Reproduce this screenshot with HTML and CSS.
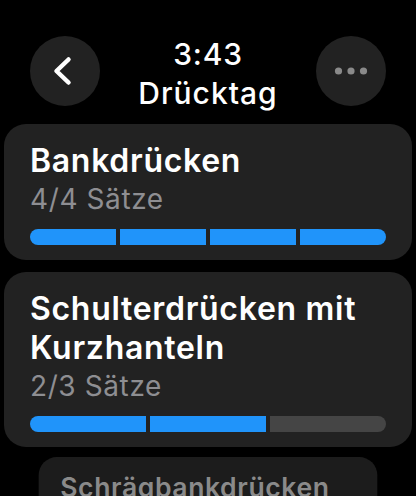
FILE: index.html
```html
<!DOCTYPE html>
<html>
<head>
  <title>Drücktag</title>
  <link rel="stylesheet" href="styles.css">
</head>
<body>

<div class="header">
  <button class="round-btn" aria-label="Zurück">
    <svg width="70" height="70" viewBox="0 0 70 70">
      <path d="M38.5 23.5 L26.5 35 L38.5 46.5" fill="none" stroke="#fff" stroke-width="4.5" stroke-linecap="round" stroke-linejoin="round"/>
    </svg>
  </button>
  <div class="title">
    <div class="time">3:43</div>
    <div class="name">Drücktag</div>
  </div>
  <button class="round-btn" aria-label="Mehr">
    <svg width="70" height="70" viewBox="0 0 70 70">
      <circle cx="22.5" cy="35" r="3.6" fill="#8a8a8a"/>
      <circle cx="35" cy="35" r="3.6" fill="#8a8a8a"/>
      <circle cx="47.5" cy="35" r="3.6" fill="#8a8a8a"/>
    </svg>
  </button>
</div>

<div class="list">
  <div class="card">
    <div class="ex-title">Bankdrücken</div>
    <div class="ex-sets">4/4 Sätze</div>
    <div class="bar">
      <span class="seg done"></span>
      <span class="seg done"></span>
      <span class="seg done"></span>
      <span class="seg done"></span>
    </div>
  </div>

  <div class="card">
    <div class="ex-title">Schulterdrücken mit Kurzhanteln</div>
    <div class="ex-sets">2/3 Sätze</div>
    <div class="bar">
      <span class="seg done"></span>
      <span class="seg done"></span>
      <span class="seg"></span>
    </div>
  </div>

  <div class="card dim">
    <div class="ex-title">Schrägbankdrücken</div>
    <div class="ex-sets">0/3 Sätze</div>
    <div class="bar">
      <span class="seg"></span>
      <span class="seg"></span>
      <span class="seg"></span>
    </div>
  </div>
</div>

</body>
</html>
```

FILE: styles.css
```css
body { margin: 0; background: #000; color: #fff; font-family: Inter, "Noto Sans", sans-serif; overflow: hidden; height: 496px; }

.header { display: flex; align-items: flex-start; justify-content: space-between; padding: 36px 30px 0; height: 88px; }
.round-btn { width: 70px; height: 70px; border: none; border-radius: 50%; background: #222; padding: 0; display: flex; }
.title { text-align: center; font-weight: 500; font-size: 30px; line-height: 39px; margin-top: -1px; }
.time { letter-spacing: 0.8px; }
.name { letter-spacing: 1px; }

.list { display: flex; flex-direction: column; gap: 12px; padding: 0 4px; }
.card { background: #222; border-radius: 22px; padding: 17px 26px 15px; }
.ex-title { font-size: 32px; font-weight: 600; line-height: 39px; letter-spacing: 0.7px; }
.ex-sets { font-size: 28px; line-height: 36px; margin-top: 1px; letter-spacing: 0.6px; color: #8e8e92; }
.bar { display: flex; gap: 4px; height: 16px; margin-top: 12px; border-radius: 8px; overflow: hidden; }
.seg { flex: 1; background: #454545; }
.seg.done { background: #2094fa; }

.card.dim { background: #1c1c1c; transform: scale(0.83); transform-origin: top center; margin-top: -2px; }
.card.dim .ex-title { color: #8a8a8a; }
```
